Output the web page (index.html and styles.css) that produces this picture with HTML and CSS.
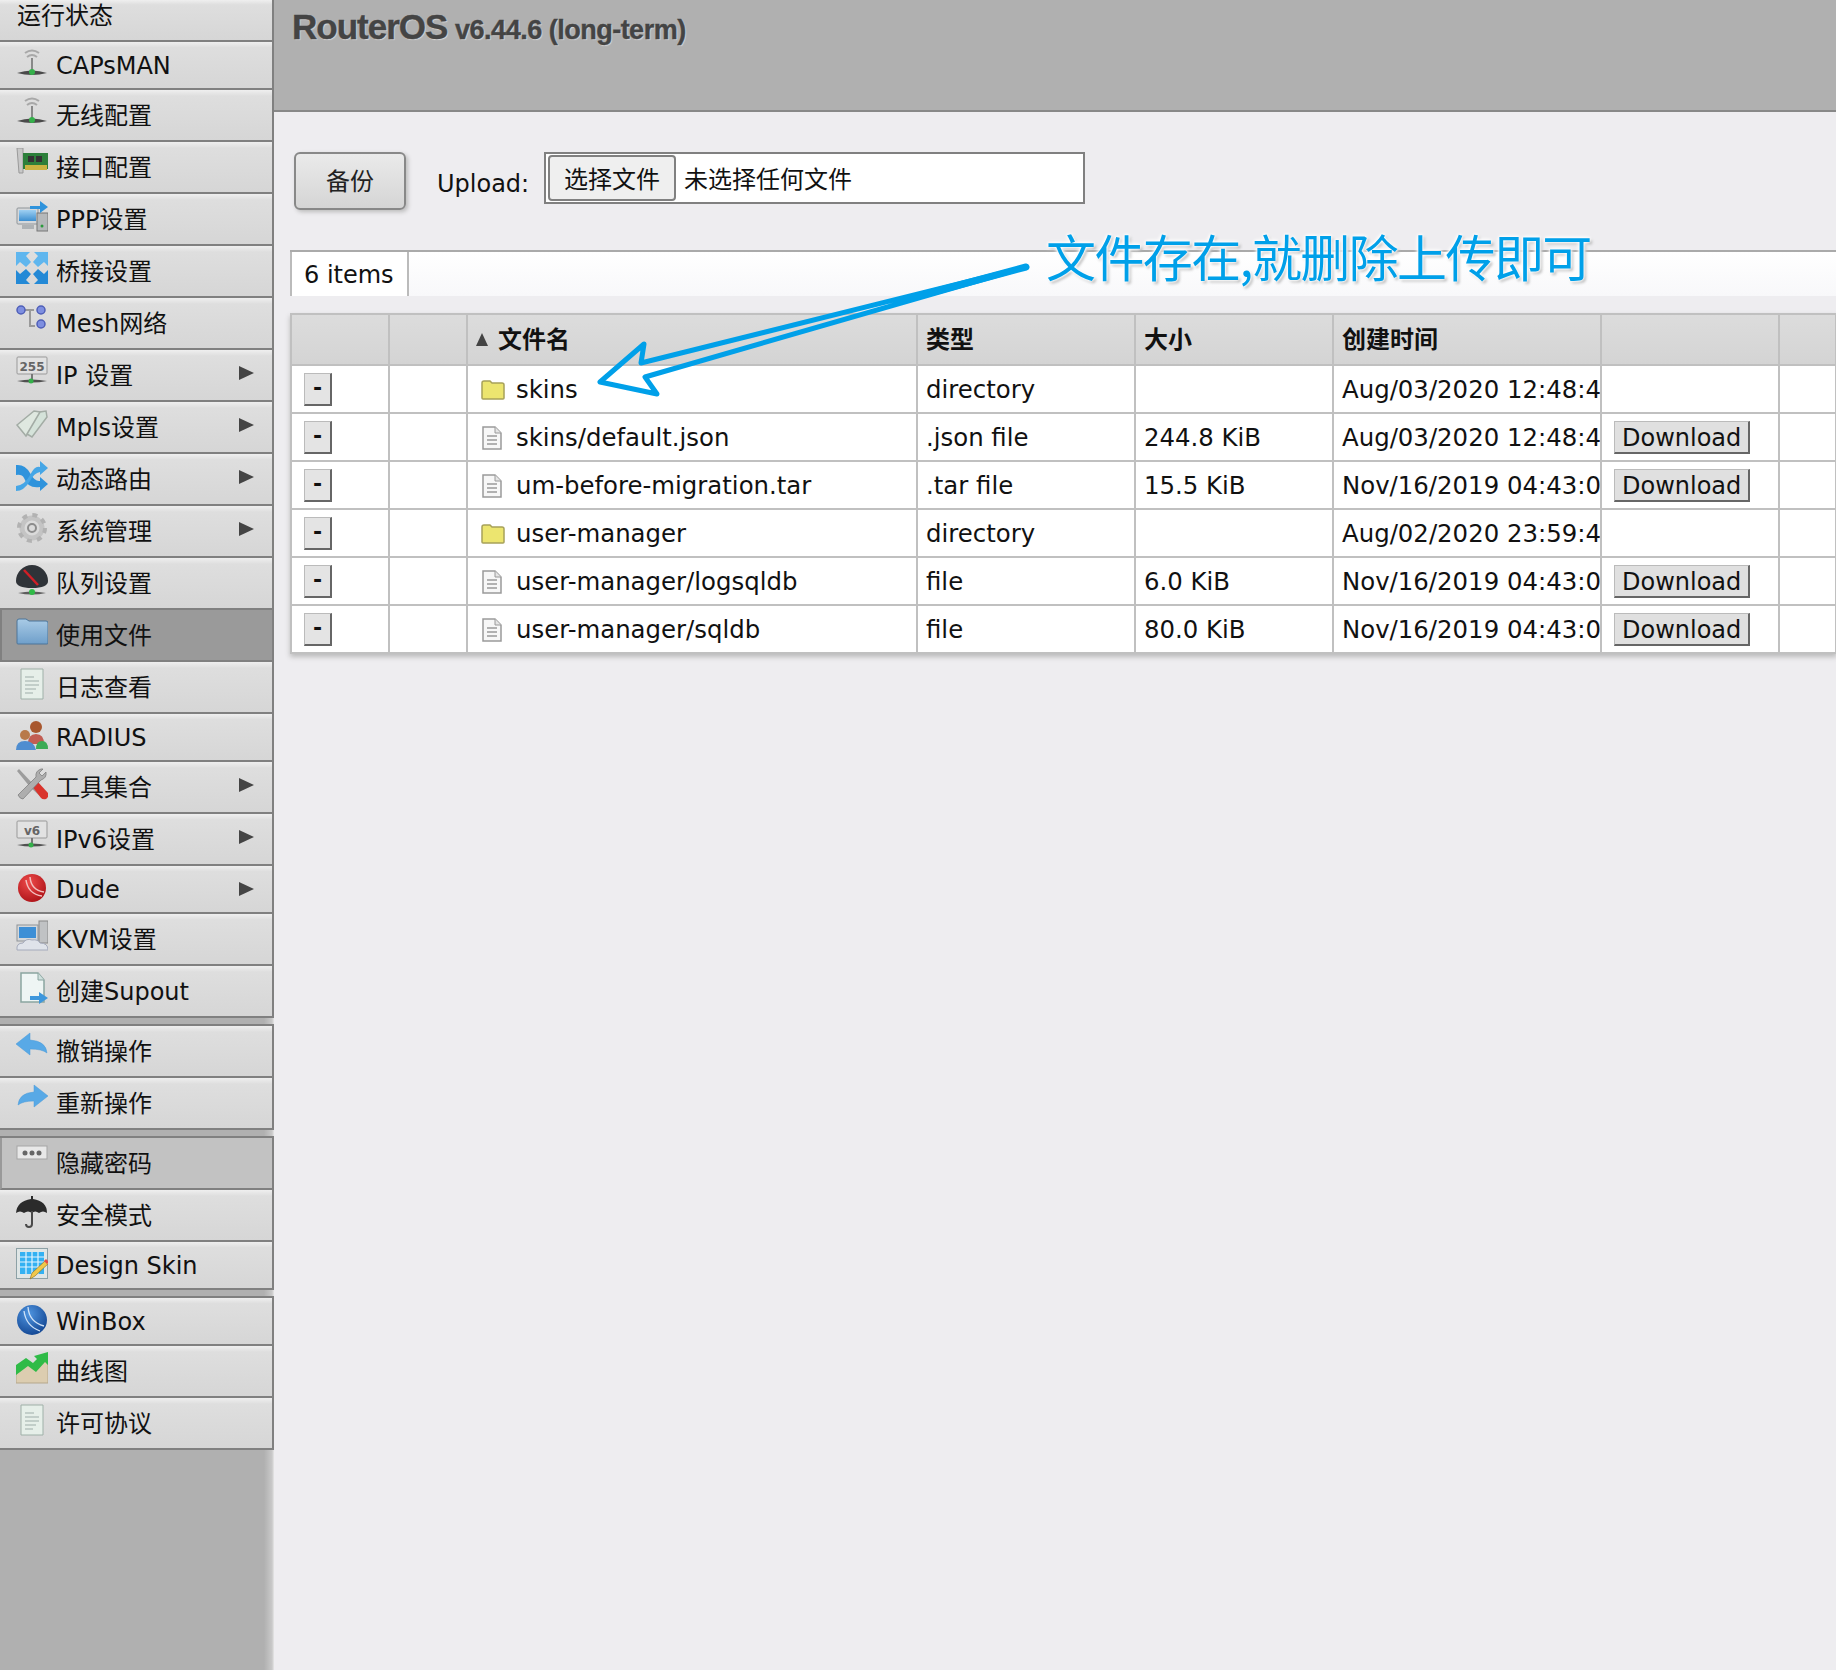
FILE: index.html
```html
<!DOCTYPE html>
<html lang="zh">
<head>
<meta charset="utf-8">
<title>RouterOS</title>
<link rel="stylesheet" href="styles.css">
</head>
<body>
<svg class="sprite" xmlns="http://www.w3.org/2000/svg" aria-hidden="true">
<defs>
<linearGradient id="gb" x1="0" y1="0" x2="0" y2="1"><stop offset="0" stop-color="#9fd0f2"/><stop offset="1" stop-color="#3d8fd0"/></linearGradient>
<linearGradient id="gf" x1="0" y1="0" x2="0" y2="1"><stop offset="0" stop-color="#a9cbe6"/><stop offset="1" stop-color="#6f9fca"/></linearGradient>
<radialGradient id="gr" cx=".4" cy=".3" r=".8"><stop offset="0" stop-color="#ee4a4a"/><stop offset="1" stop-color="#a80f14"/></radialGradient>
<radialGradient id="gw" cx=".4" cy=".3" r=".8"><stop offset="0" stop-color="#4f95e0"/><stop offset="1" stop-color="#0d3f8c"/></radialGradient>
<symbol id="i-ant" viewBox="0 0 32 32">
<path d="M9 5Q16 0 23 5M11 9Q16 5 21 9" fill="none" stroke="#a8a8a8" stroke-width="2"/>
<path d="M15 10h2v12h-2z" fill="#888"/><path d="M1 25Q16 20 31 25Q16 29 1 25z" fill="#4a4a4a"/><circle cx="16" cy="24" r="3" fill="#34b04a"/>
</symbol>
<symbol id="i-nic" viewBox="0 0 32 32">
<path d="M1 0h6v25H3z" fill="#c8c8c8" stroke="#999"/><rect x="7" y="5" width="25" height="16" fill="#2c7f3a"/><rect x="12" y="8" width="6" height="6" fill="#333"/><rect x="20" y="8" width="6" height="6" fill="#333"/><path d="M9 17h22v5H9z" fill="#c9b341"/>
</symbol>
<symbol id="i-ppp" viewBox="0 0 32 32">
<rect x="1" y="8" width="21" height="16" rx="1" fill="#d5d8db" stroke="#8f9498"/><rect x="3" y="10" width="17" height="11" fill="url(#gb)"/><rect x="6" y="25" width="12" height="4" fill="#aeb2b5"/><rect x="21" y="13" width="11" height="18" fill="#b5b8ba" stroke="#777"/><circle cx="26" cy="26" r="1.5" fill="#2a9a3c"/><path d="M14 6h10V1l8 6-8 6V9H14z" fill="#2f93dc"/>
</symbol>
<symbol id="i-bridge" viewBox="0 0 32 32">
<path d="M0 0h14L10 4l5 6-5 5-6-5-4 4z" fill="#5fb6ee"/><path d="M32 0H18l4 4-5 6 5 5 6-5 4 4z" fill="#5fb6ee"/><path d="M0 32H14l-4-4 5-6-5-5-6 5-4-4z" fill="#2389d6"/><path d="M32 32H18l4-4-5-6 5-5 6 5 4-4z" fill="#2389d6"/>
</symbol>
<symbol id="i-mesh" viewBox="0 0 32 32">
<path d="M9 6h9M14 6v16h5" fill="none" stroke="#9a9a9a" stroke-width="2"/><g fill="#7e8fe0" stroke="#4f5fb8" stroke-width="1.500"><circle cx="5" cy="6" r="4"/><circle cx="25" cy="6" r="4"/><circle cx="25" cy="20" r="4"/></g>
</symbol>
<symbol id="i-255" viewBox="0 0 32 32">
<rect x="1" y="1" width="30" height="17" rx="1" fill="#e2e2e2" stroke="#999"/><text x="16" y="15" text-anchor="middle" class="ic-t">255</text><path d="M15 18h2v6h-2z" fill="#777"/><path d="M1 25Q16 22 31 25Q16 28 1 25z" fill="#505050"/><circle cx="15" cy="25" r="2.500" fill="#34b04a"/>
</symbol>
<symbol id="i-v6" viewBox="0 0 32 32">
<rect x="1" y="1" width="30" height="17" rx="1" fill="#e2e2e2" stroke="#999"/><text x="16" y="15" text-anchor="middle" class="ic-t">v6</text><path d="M15 18h2v6h-2z" fill="#777"/><path d="M1 25Q16 22 31 25Q16 28 1 25z" fill="#505050"/><circle cx="15" cy="25" r="2.500" fill="#34b04a"/>
</symbol>
<symbol id="i-mpls" viewBox="0 0 32 32">
<path d="M1 17 18 3l6 1 1 5-15 19z" fill="#dfe8e0" stroke="#a3aca5" stroke-width="1.500"/><path d="M11 26 24 4l6-1 1 6-15 20z" fill="#d5e3da" stroke="#a3aca5" stroke-width="1.500"/>
</symbol>
<symbol id="i-route" viewBox="0 0 32 32">
<path d="M0 5Q9 4 14 13T24 21V17l8 7-8 7v-4Q12 29 8 18 6 14 0 15z" fill="#2f93dc"/><path d="M0 26Q9 25 14 15T24 7V1l8 7-8 7V12Q18 13 14 21 8 31 0 31z" fill="#46a6e6"/>
</symbol>
<symbol id="i-gear" viewBox="0 0 32 32">
<circle cx="16" cy="16" r="10" fill="none" stroke="#c4c4c4" stroke-width="5"/><circle cx="16" cy="16" r="13" fill="none" stroke="#b2b2b2" stroke-width="4" stroke-dasharray="5 5.200"/><circle cx="16" cy="16" r="4" fill="none" stroke="#8c8c8c" stroke-width="2"/>
</symbol>
<symbol id="i-queue" viewBox="0 0 32 32">
<path d="M0 17A16 16 0 0 1 32 17Q32 24 16 24T0 17z" fill="#2f3338"/><path d="M8 6 22 21" stroke="#d01f26" stroke-width="2.500"/><path d="M2 29Q16 26 30 29Q16 32 2 29z" fill="#5d5d5d"/><circle cx="16" cy="28" r="3" fill="#2fbb47"/>
</symbol>
<symbol id="i-folder" viewBox="0 0 32 32">
<path d="M1 27V5q0-2 2-2h7l3 2h17q2 0 2 2v20q0 1-1 1H2q-1 0-1-1z" fill="url(#gf)" stroke="#4c7599"/>
</symbol>
<symbol id="i-log" viewBox="0 0 32 32">
<path d="M5 1h22v30H5z" fill="#e6efe9" stroke="#9fb0a8"/><path d="M9 9h9M9 13h14M9 17h14M9 21h11M9 25h8" stroke="#b7c4bf" stroke-width="1.500"/>
</symbol>
<symbol id="i-radius" viewBox="0 0 32 32">
<circle cx="20" cy="7" r="6" fill="#a8572e"/><path d="M12 24q0-10 8-10t8 10z" fill="#c25d52"/><path d="M20 29q0-8 6-8t6 8z" fill="#3cab56"/><circle cx="9" cy="15" r="5" fill="#b87a4a"/><path d="M0 30q0-9 9-9t11 9z" fill="#4e8dd0"/>
</symbol>
<symbol id="i-tools" viewBox="0 0 32 32">
<path d="M1 3 3 1 18 17 29 27 27 31 14 19z" fill="#9c9c9c"/><path d="M16 18l5-5 11 12q1 4-2 6-3 1-5-1z" fill="#d9342c"/><path d="M2 27 20 9q-1-6 5-8l2 0-4 4 3 3 4-4q1 6-5 8L7 31q-3 0-5-4z" fill="#aeaeae" stroke="#777" stroke-width=".7"/>
</symbol>
<symbol id="i-dude" viewBox="0 0 32 32">
<circle cx="16" cy="16" r="14" fill="url(#gr)"/><path d="M14 5Q15 18 28 20M10 8Q12 22 26 24" fill="none" stroke="#f2c0c0" stroke-width="1.500"/>
</symbol>
<symbol id="i-kvm" viewBox="0 0 32 32">
<rect x="1" y="5" width="21" height="16" fill="#d5d8db" stroke="#8f9498"/><rect x="3" y="7" width="17" height="11" fill="#3d8fd6"/><rect x="23" y="1" width="9" height="22" fill="#c0c2c4" stroke="#888"/><path d="M1 30q-1-7 6-7 3-5 9-3 6-1 8 3 8 0 8 7z" fill="#dfe3ea" stroke="#a4aabb"/>
</symbol>
<symbol id="i-sup" viewBox="0 0 32 32">
<path d="M5 1h17l6 7v22H5z" fill="#eef5f4" stroke="#8aa5a0" stroke-width="1.500"/><path d="M22 1v7h6" fill="#cfe0dd" stroke="#8aa5a0"/><path d="M14 24h9v-4l9 6-9 6v-4h-9z" fill="#3e97dc"/>
</symbol>
<symbol id="i-undo" viewBox="0 0 32 32">
<path d="M0 12 14 1v7q16 1 17 13Q26 17 14 17v6z" fill="#58a9e6" stroke="#4b9ad8" stroke-width=".5"/>
</symbol>
<symbol id="i-redo" viewBox="0 0 32 32">
<path d="M32 12 18 1v7Q3 9 2 21 7 17 18 17v6z" fill="#58a9e6" stroke="#4b9ad8" stroke-width=".5"/>
</symbol>
<symbol id="i-dots" viewBox="0 0 32 32">
<rect x="1" y="2" width="30" height="13" fill="#e8e8e8" stroke="#a5a5a5"/><g fill="#666"><circle cx="9" cy="9" r="2.500"/><circle cx="16" cy="9" r="2.500"/><circle cx="23" cy="9" r="2.500"/></g>
</symbol>
<symbol id="i-umb" viewBox="0 0 32 32">
<path d="M0 17Q1 5 15 3V0h2v3Q31 5 31 17 27 14 23 17 19 14 16 17 12 14 8 17 4 14 0 17z" fill="#2b2b2b"/><path d="M16 15v13q0 3-3 3t-3-3" fill="none" stroke="#4a4a4a" stroke-width="2"/>
</symbol>
<symbol id="i-design" viewBox="0 0 32 32">
<rect x="0.500" y="0.500" width="31" height="30" fill="#dfe6e6" stroke="#8da1a6"/><rect x="4" y="4" width="24" height="22" fill="#33b1f2"/><path d="M4 9h24M4 14h24M4 19h24M10 4v22M16 4v22M22 4v22" stroke="#e3f4fd" stroke-width="1.200"/><path d="M14 31l2-6 14-13 3 3-14 13z" fill="#f0c84a" stroke="#8a6a1d" stroke-width=".6"/><path d="M28 13l2-2 3 3-2 2z" fill="#e24a4a"/>
</symbol>
<symbol id="i-win" viewBox="0 0 32 32">
<circle cx="16" cy="16" r="15" fill="url(#gw)"/><path d="M12 3Q13 18 28 22M8 7Q10 22 24 27" fill="none" stroke="#cfe2f7" stroke-width="1.300"/>
</symbol>
<symbol id="i-chart" viewBox="0 0 32 32">
<path d="M0 17 10 11l8 5 6-8 8 1v22H0z" fill="#dccdb0" stroke="#b5a78c"/><path d="M0 13 10 6l7 5 4-4-3-3L32 0v13l-3-3-9 10-8-6-12 9z" fill="#2fbb47"/>
</symbol>
<symbol id="i-fold-y" viewBox="0 0 24 20">
<path d="M1 18V3q0-2 2-2h6l2 2h10q2 0 2 2v13q0 1-1 1H2q-1 0-1-1z" fill="#ece56f" stroke="#a7a15a" stroke-width="1.500"/>
</symbol>
<symbol id="i-file" viewBox="0 0 20 24">
<path d="M1 1h12l6 6v16H1z" fill="#f7f7f7" stroke="#9a9a9a" stroke-width="1.500"/><path d="M13 1v6h6" fill="#e5e5e5" stroke="#9a9a9a"/><path d="M5 10h10M5 14h10M5 18h10" stroke="#9a9a9a" stroke-width="1.500"/>
</symbol>
</defs>
</svg>

<div class="app">
<nav class="sidebar">
<div class="group">
<a class="item first"><span class="lb lb-noicon">运行状态</span></a>
<a class="item short"><svg class="ic"><use href="#i-ant"/></svg><span class="lb">CAPsMAN</span></a>
<a class="item"><svg class="ic"><use href="#i-ant"/></svg><span class="lb">无线配置</span></a>
<a class="item"><svg class="ic"><use href="#i-nic"/></svg><span class="lb">接口配置</span></a>
<a class="item"><svg class="ic"><use href="#i-ppp"/></svg><span class="lb">PPP设置</span></a>
<a class="item"><svg class="ic"><use href="#i-bridge"/></svg><span class="lb">桥接设置</span></a>
<a class="item"><svg class="ic"><use href="#i-mesh"/></svg><span class="lb">Mesh网络</span></a>
<a class="item"><svg class="ic"><use href="#i-255"/></svg><span class="lb">IP 设置</span><i class="tri"></i></a>
<a class="item"><svg class="ic"><use href="#i-mpls"/></svg><span class="lb">Mpls设置</span><i class="tri"></i></a>
<a class="item"><svg class="ic"><use href="#i-route"/></svg><span class="lb">动态路由</span><i class="tri"></i></a>
<a class="item"><svg class="ic"><use href="#i-gear"/></svg><span class="lb">系统管理</span><i class="tri"></i></a>
<a class="item"><svg class="ic"><use href="#i-queue"/></svg><span class="lb">队列设置</span></a>
<a class="item active"><svg class="ic"><use href="#i-folder"/></svg><span class="lb">使用文件</span></a>
<a class="item"><svg class="ic"><use href="#i-log"/></svg><span class="lb">日志查看</span></a>
<a class="item short"><svg class="ic"><use href="#i-radius"/></svg><span class="lb">RADIUS</span></a>
<a class="item"><svg class="ic"><use href="#i-tools"/></svg><span class="lb">工具集合</span><i class="tri"></i></a>
<a class="item"><svg class="ic"><use href="#i-v6"/></svg><span class="lb">IPv6设置</span><i class="tri"></i></a>
<a class="item short"><svg class="ic"><use href="#i-dude"/></svg><span class="lb">Dude</span><i class="tri"></i></a>
<a class="item"><svg class="ic"><use href="#i-kvm"/></svg><span class="lb">KVM设置</span></a>
<a class="item"><svg class="ic"><use href="#i-sup"/></svg><span class="lb">创建Supout</span></a>
</div>
<div class="group">
<a class="item"><svg class="ic"><use href="#i-undo"/></svg><span class="lb">撤销操作</span></a>
<a class="item"><svg class="ic"><use href="#i-redo"/></svg><span class="lb">重新操作</span></a>
</div>
<div class="group">
<a class="item dim"><svg class="ic"><use href="#i-dots"/></svg><span class="lb">隐藏密码</span></a>
<a class="item"><svg class="ic"><use href="#i-umb"/></svg><span class="lb">安全模式</span></a>
<a class="item short"><svg class="ic"><use href="#i-design"/></svg><span class="lb">Design Skin</span></a>
</div>
<div class="group">
<a class="item short"><svg class="ic"><use href="#i-win"/></svg><span class="lb">WinBox</span></a>
<a class="item"><svg class="ic"><use href="#i-chart"/></svg><span class="lb">曲线图</span></a>
<a class="item"><svg class="ic"><use href="#i-log"/></svg><span class="lb">许可协议</span></a>
</div>
</nav>

<main class="main">
<header class="topbar"><h1 class="brand">RouterOS <small class="ver">v6.44.6 (long-term)</small></h1></header>

<div class="toolbar">
<button class="backup" type="button">备份</button>
<span class="upload-label">Upload:</span>
<div class="file-box"><span class="file-btn">选择文件</span><span class="file-none">未选择任何文件</span></div>
</div>

<div class="countbar"><span class="count">6 items</span></div>

<table class="files">
<colgroup><col class="c1"><col class="c2"><col class="c3"><col class="c4"><col class="c5"><col class="c6"><col class="c7"><col class="c8"></colgroup>
<thead>
<tr><th></th><th></th><th><i class="sort"></i>文件名</th><th>类型</th><th>大小</th><th>创建时间</th><th></th><th></th></tr>
</thead>
<tbody>
<tr><td><span class="minus">-</span></td><td></td><td><span class="name"><svg class="fold"><use href="#i-fold-y"/></svg>skins</span></td><td>directory</td><td></td><td class="date">Aug/03/2020 12:48:45</td><td></td><td></td></tr>
<tr><td><span class="minus">-</span></td><td></td><td><span class="name"><svg class="doc"><use href="#i-file"/></svg>skins/default.json</span></td><td>.json file</td><td>244.8 KiB</td><td class="date">Aug/03/2020 12:48:45</td><td><span class="dl">Download</span></td><td></td></tr>
<tr><td><span class="minus">-</span></td><td></td><td><span class="name"><svg class="doc"><use href="#i-file"/></svg>um-before-migration.tar</span></td><td>.tar file</td><td>15.5 KiB</td><td class="date">Nov/16/2019 04:43:08</td><td><span class="dl">Download</span></td><td></td></tr>
<tr><td><span class="minus">-</span></td><td></td><td><span class="name"><svg class="fold"><use href="#i-fold-y"/></svg>user-manager</span></td><td>directory</td><td></td><td class="date">Aug/02/2020 23:59:45</td><td></td><td></td></tr>
<tr><td><span class="minus">-</span></td><td></td><td><span class="name"><svg class="doc"><use href="#i-file"/></svg>user-manager/logsqldb</span></td><td>file</td><td>6.0 KiB</td><td class="date">Nov/16/2019 04:43:08</td><td><span class="dl">Download</span></td><td></td></tr>
<tr><td><span class="minus">-</span></td><td></td><td><span class="name"><svg class="doc"><use href="#i-file"/></svg>user-manager/sqldb</span></td><td>file</td><td>80.0 KiB</td><td class="date">Nov/16/2019 04:43:08</td><td><span class="dl">Download</span></td><td></td></tr>
</tbody>
</table>

<svg class="arrow" viewBox="0 0 1836 1670" xmlns="http://www.w3.org/2000/svg" aria-hidden="true">
<path class="arrow-line" d="M1026 267 L641 363 L644 344 L600 382 L657 394 L645 377 Z"/>
<path class="arrow-tail" d="M900 301 L1026 267"/>
</svg>
<div class="note">文件存在,就删除上传即可</div>
</main>
</div>
</body>
</html>
```
FILE: styles.css
```css
* { box-sizing: border-box; }
html, body { margin: 0; height: 100%; overflow: hidden; }
body {
  width: 1836px; height: 1670px;
  background: #eeedf0;
  color: #111;
  font-family: "DejaVu Sans", "Noto Sans CJK SC", sans-serif;
  font-size: 24px;
}
.sprite { position: absolute; width: 0; height: 0; }
.ic-t { font-family: "DejaVu Sans", sans-serif; font-size: 12px; font-weight: bold; fill: #666; }

.app { display: flex; height: 1670px; }

/* sidebar */
.sidebar {
  flex: 0 0 274px;
  height: 100%;
  background: linear-gradient(90deg, #b0b0b0 0, #b0b0b0 264px, #c9c9c9 272px, #e6e6e6 274px);
}
.group { border-top: 2px solid #808080; margin-top: 6px; width: 274px; }
.group:first-child { border-top: 0; margin-top: 0; }
.item {
  display: flex;
  align-items: flex-start;
  height: 52px;
  padding: 6px 18px 0 16px;
  border-bottom: 2px solid #808080;
  border-right: 2px solid #808080;
  background: linear-gradient(180deg, #efefef 0, #dedede 12%, #d6d6d6 100%);
  line-height: 40px;
}
.group:first-child .item.first { height: 42px; padding-top: 0; line-height: 32px; }
.item.short { height: 48px; line-height: 36px; }
.item .lb { margin-left: 8px; white-space: nowrap; }
.item .lb.lb-noicon { margin-left: 1px; }
.item.active { background: #9a9a9a; border-left: 2px solid #808080; padding-left: 14px; }
.item.dim { background: #c2c2c2; border-left: 2px solid #999; padding-left: 14px; }
.ic { width: 32px; height: 32px; flex: none; display: block; }
.tri {
  margin-left: auto; margin-top: 10px;
  width: 0; height: 0;
  border-left: 15px solid #444;
  border-top: 7px solid transparent;
  border-bottom: 7px solid transparent;
}

/* main */
.main { flex: 1; min-width: 0; position: relative; overflow: hidden; }
.topbar { height: 112px; background: #b0b0b0; border-bottom: 2px solid #888; padding: 8px 18px; }
.brand {
  margin: 0; color: #444;
  font-family: "Liberation Sans", sans-serif;
  font-size: 35px; line-height: 37px; font-weight: bold; letter-spacing: -1px;
  -webkit-text-stroke: .4px #444;
  text-shadow: 1px 1px 1px #d8d8d8;
}
.ver { font-size: 27px; letter-spacing: -.5px; margin-left: -1px; }

.toolbar { display: flex; align-items: flex-start; padding: 40px 0 0 20px; height: 138px; }
.backup {
  width: 112px; height: 58px; padding: 0 0 3px;
  border: 2px solid #888; border-radius: 6px;
  background: linear-gradient(180deg, #eaeaea, #d5d5d5);
  box-shadow: 2px 2px 4px #bbb;
  color: #222;
  font: 24px "DejaVu Sans", "Noto Sans CJK SC", sans-serif;
}
.upload-label { margin: 16px 0 0 31px; width: 107px; line-height: 32px; }
.file-box {
  display: flex; align-items: center;
  width: 541px; height: 52px;
  background: #fff;
  border: 2px solid #808080;
  padding: 2px 2px;
}
.file-btn {
  width: 128px; height: 46px; flex: none;
  background: #efefef;
  border: 2px solid #808080; border-radius: 4px;
  text-align: center; line-height: 42px;
  font-family: "Noto Sans CJK SC", sans-serif;
}
.file-none { margin-left: 8px; line-height: 46px; height: 46px; font-family: "Noto Sans CJK SC", sans-serif; }

.countbar {
  margin-left: 16px; height: 46px;
  border-top: 2px solid #aaa;
  background: linear-gradient(180deg, #fff, #f8f8fa);
}
.count {
  display: block; width: 119px; height: 44px;
  padding-left: 12px; line-height: 46px;
  background: #fff;
  border-left: 2px solid #bbb; border-right: 2px solid #bbb;
}

.files {
  margin: 17px 0 0 16px;
  width: 1545px;
  table-layout: fixed;
  border-collapse: collapse;
  box-shadow: 0 3px 5px #bbb;
  background: #fff;
}
.c1 { width: 98px; } .c2 { width: 78px; } .c3 { width: 450px; } .c4 { width: 218px; }
.c5 { width: 198px; } .c6 { width: 268px; } .c7 { width: 178px; } .c8 { width: 57px; }
.files th, .files td {
  border: 2px solid #c0c0c0;
  padding: 0 8px;
  white-space: nowrap; overflow: hidden;
  text-align: left;
}
.files th {
  height: 51px;
  padding-bottom: 4px;
  background: linear-gradient(180deg, #dcdcdc, #d4d4d4);
  font-size: 24px; font-weight: bold;
  font-family: "Noto Sans CJK SC", sans-serif;
}
.files td { height: 48px; font-size: 24.4px; padding-top: 1px; }
.files td.date { padding-right: 0; }
.sort {
  display: inline-block; margin-right: 10px; vertical-align: 2px;
  border-bottom: 13px solid #444;
  border-left: 6px solid transparent; border-right: 6px solid transparent;
}
.minus {
  display: block; width: 28px; height: 33px; margin-left: 4px;
  background: #e4e4e4;
  border: 1px solid #bbb;
  border-right: 2px solid #666; border-bottom: 2px solid #666;
  text-align: center; line-height: 28px; font-size: 22px; font-weight: bold;
}
.name { display: flex; align-items: center; }
.fold { width: 24px; height: 20px; margin: 0 11px 0 5px; flex: none; }
.doc { width: 20px; height: 24px; margin: 0 14px 0 6px; flex: none; }
.dl {
  display: inline-block; height: 33px; padding: 0 7px; margin-left: 4px;
  background: #e0e0e0;
  border: 1px solid #bbb;
  border-right: 2px solid #666; border-bottom: 2px solid #666;
  font-size: 24px;
  line-height: 32px;
}

/* annotation */
.arrow { position: absolute; left: -274px; top: 0; width: 1836px; height: 1670px; pointer-events: none; }
.arrow-line { fill: none; stroke: #00a0e9; stroke-width: 5; stroke-linejoin: round; }
.arrow-tail { fill: none; stroke: #00a0e9; stroke-width: 7; stroke-linecap: round; }
.note {
  position: absolute; left: 772px; top: 222px;
  color: #00a0e9;
  font-family: "Noto Sans CJK SC", sans-serif;
  font-size: 50px; line-height: 66px; white-space: nowrap; letter-spacing: -1.6px;
  text-shadow: 0 0 2px #fff, 0 0 3px #fff, 0 0 4px #fff, 0 0 5px #fff, 2px 2px 3px #999;
}
```
